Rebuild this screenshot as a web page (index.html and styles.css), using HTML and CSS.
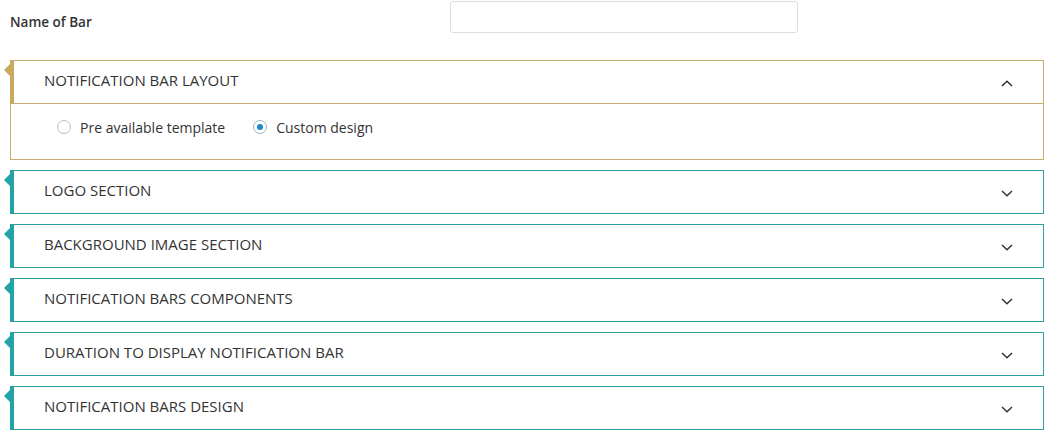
FILE: index.html
```html
<!DOCTYPE html>
<html>
<head>
<meta charset="utf-8">
<link rel="stylesheet" href="styles.css">
</head>
<body>
<div class="page">
  <div class="name-row">
    <label class="name-label">Name of Bar</label>
    <input class="name-input" type="text">
  </div>
  <div class="panels">
    <div class="panel gold open">
      <div class="panel-head">
        <span class="panel-title">NOTIFICATION BAR LAYOUT</span>
        <svg class="chev" width="12" height="7" viewBox="0 0 12 7"><path d="M1 6 L6 1.2 L11 6" fill="none" stroke="#333" stroke-width="1.5"/></svg>
      </div>
      <div class="panel-body">
        <label class="radio"><span class="dot"></span>Pre available template</label>
        <label class="radio checked"><span class="dot"></span>Custom design</label>
      </div>
    </div>
    <div class="panel teal">
      <div class="panel-head">
        <span class="panel-title">LOGO SECTION</span>
        <svg class="chev" width="12" height="7" viewBox="0 0 12 7"><path d="M1 1 L6 5.8 L11 1" fill="none" stroke="#333" stroke-width="1.5"/></svg>
      </div>
    </div>
    <div class="panel teal">
      <div class="panel-head">
        <span class="panel-title">BACKGROUND IMAGE SECTION</span>
        <svg class="chev" width="12" height="7" viewBox="0 0 12 7"><path d="M1 1 L6 5.8 L11 1" fill="none" stroke="#333" stroke-width="1.5"/></svg>
      </div>
    </div>
    <div class="panel teal">
      <div class="panel-head">
        <span class="panel-title">NOTIFICATION BARS COMPONENTS</span>
        <svg class="chev" width="12" height="7" viewBox="0 0 12 7"><path d="M1 1 L6 5.8 L11 1" fill="none" stroke="#333" stroke-width="1.5"/></svg>
      </div>
    </div>
    <div class="panel teal">
      <div class="panel-head">
        <span class="panel-title">DURATION TO DISPLAY NOTIFICATION BAR</span>
        <svg class="chev" width="12" height="7" viewBox="0 0 12 7"><path d="M1 1 L6 5.8 L11 1" fill="none" stroke="#333" stroke-width="1.5"/></svg>
      </div>
    </div>
    <div class="panel teal">
      <div class="panel-head">
        <span class="panel-title">NOTIFICATION BARS DESIGN</span>
        <svg class="chev" width="12" height="7" viewBox="0 0 12 7"><path d="M1 1 L6 5.8 L11 1" fill="none" stroke="#333" stroke-width="1.5"/></svg>
      </div>
    </div>
  </div>
</div>
</body>
</html>
```

FILE: styles.css
```css
html, body {
  margin: 0;
  padding: 0;
  background: #fff;
}
body {
  font-family: "Open Sans", "Liberation Sans", sans-serif;
  color: #333;
}
.page {
  padding: 1px 10px 0 10px;
}
.name-row {
  display: flex;
  align-items: flex-start;
  height: 32px;
}
.name-label {
  width: 440px;
  font-size: 13.5px;
  line-height: 18px;
  font-weight: 600;
  color: #333;
  padding-top: 12px;
}
.name-input {
  width: 348px;
  height: 32px;
  box-sizing: border-box;
  border: 1px solid #ddd;
  border-radius: 3px;
  margin: 0;
  padding: 0 8px;
  background: #fff;
}
.panels {
  display: flex;
  flex-direction: column;
  gap: 10px;
  margin-top: 27px;
  width: 1034px;
}
.panel {
  position: relative;
  box-sizing: border-box;
  border: 1px solid;
  background: #fff;
}
.panel.gold { border-color: #c9ab6c; }
.panel.teal { border-color: #2f9ea1; }
.panel::before {
  content: "";
  position: absolute;
  left: -7px;
  top: 3px;
  width: 0;
  height: 0;
  border-top: 6px solid transparent;
  border-bottom: 6px solid transparent;
  border-right: 6px solid;
}
.panel.gold::before { border-right-color: #c9a95f; }
.panel.teal::before { border-right-color: #22a3a6; }
.panel-head {
  display: flex;
  align-items: center;
  justify-content: space-between;
  box-sizing: border-box;
  height: 42px;
  padding: 0 30px 4px 30px;
  border-left: 4px solid;
  margin-left: -1px;
}
.gold .panel-head { border-left-color: #c9a95f; }
.teal .panel-head { border-left-color: #22a3a6; }
.open .panel-head {
  height: 43px;
  border-bottom: 1px solid #c9ab6c;
}
.panel-title {
  font-size: 15px;
  line-height: 20px;
  color: #333;
}
.chev {
  display: block;
  margin-top: 6px;
}
.panel-body {
  display: flex;
  align-items: center;
  box-sizing: border-box;
  height: 55px;
  padding: 0 0 9px 46px;
  gap: 28px;
}
.radio {
  display: flex;
  align-items: center;
  font-size: 14px;
  color: #333;
  gap: 9px;
}
.dot {
  width: 14px;
  height: 14px;
  box-sizing: border-box;
  border: 1px solid #bbb;
  border-radius: 50%;
  display: inline-flex;
  align-items: center;
  justify-content: center;
  background: #fff;
}
.checked .dot {
  border-color: #9fb3c4;
}
.checked .dot::after {
  content: "";
  width: 6px;
  height: 6px;
  border-radius: 50%;
  background: #1e88c8;
}
```
